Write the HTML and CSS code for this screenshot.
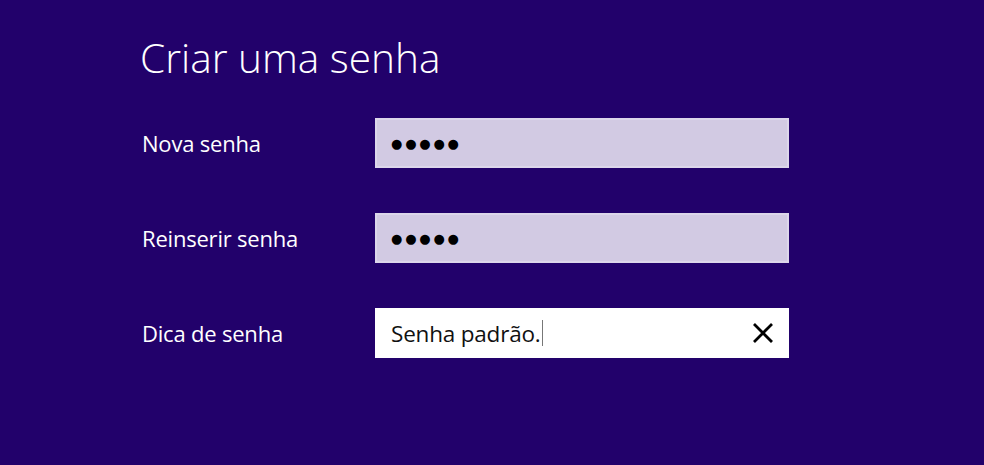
FILE: index.html
```html
<!DOCTYPE html>
<html lang="pt">
<head>
<meta charset="utf-8">
<link rel="stylesheet" href="styles.css">
</head>
<body>
<main class="panel">
  <h1 class="title">Criar uma senha</h1>
  <div class="form">
    <div class="row">
      <span class="label">Nova senha</span>
      <div class="field filled"><span class="dots">●●●●●</span></div>
    </div>
    <div class="row">
      <span class="label">Reinserir senha</span>
      <div class="field filled"><span class="dots">●●●●●</span></div>
    </div>
    <div class="row">
      <span class="label">Dica de senha</span>
      <div class="field active">
        <span class="text">Senha padrão.</span><span class="caret"></span>
        <svg class="clear" width="22" height="22" viewBox="0 0 22 22"><path d="M2 2 L20 20 M20 2 L2 20" stroke="#000" stroke-width="2.8" fill="none"/></svg>
      </div>
    </div>
  </div>
</main>
</body>
</html>
```
FILE: styles.css
```css
html, body {
  margin: 0;
  padding: 0;
  background: #22016b;
  height: 100%;
}
body {
  font-family: "Open Sans", "Noto Sans", sans-serif;
  color: #fff;
  overflow: hidden;
}
.panel {
  padding: 31px 0 0 140px;
}
.title {
  margin: 0;
  font-weight: 300;
  font-size: 40.6px;
  line-height: 54px;
  letter-spacing: 0;
}
.form {
  display: flex;
  flex-direction: column;
  gap: 45px;
  margin-top: 33px;
}
.row {
  display: flex;
  align-items: center;
  height: 50px;
}
.label {
  width: 233px;
  font-size: 22px;
  padding-left: 2px;
  letter-spacing: -0.2px;
}
.field {
  box-sizing: border-box;
  width: 414px;
  height: 50px;
  display: flex;
  align-items: center;
  padding-left: 14px;
  color: #000;
}
.filled {
  background: #d2cae3;
  border: 2px solid #dcd6ea;
}
.active {
  background: #fff;
  border: 2px solid #fff;
}
.dots {
  font-family: "DejaVu Sans", sans-serif;
  font-size: 13px;
  letter-spacing: 2.8px;
}
.text {
  font-size: 22.5px;
  letter-spacing: -0.2px;
  color: #111;
}
.caret {
  display: inline-block;
  width: 1px;
  height: 26px;
  background: #777;
  margin-left: 1px;
}
.clear {
  margin-left: auto;
  margin-right: 13px;
}
```
